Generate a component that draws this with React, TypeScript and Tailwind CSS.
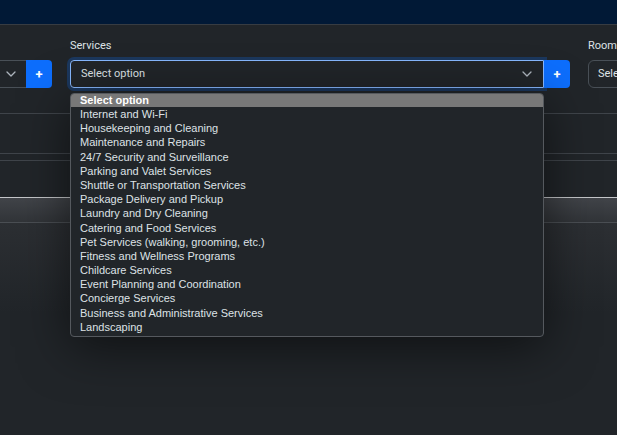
import { useState } from "react";

const services = [
  "Internet and Wi-Fi",
  "Housekeeping and Cleaning",
  "Maintenance and Repairs",
  "24/7 Security and Surveillance",
  "Parking and Valet Services",
  "Shuttle or Transportation Services",
  "Package Delivery and Pickup",
  "Laundry and Dry Cleaning",
  "Catering and Food Services",
  "Pet Services (walking, grooming, etc.)",
  "Fitness and Wellness Programs",
  "Childcare Services",
  "Event Planning and Coordination",
  "Concierge Services",
  "Business and Administrative Services",
  "Landscaping",
];

function Chevron() {
  return (
    <svg width="10" height="6" viewBox="0 0 10 6" className="shrink-0">
      <polyline
        points="1,1 5,5 9,1"
        fill="none"
        stroke="#adb5bd"
        strokeWidth="1.3"
        strokeLinecap="round"
        strokeLinejoin="round"
      />
    </svg>
  );
}

function AddButton() {
  return (
    <button className="w-[26px] h-[28px] bg-[#0d6efd] text-white rounded-r-[4px] flex items-center justify-center text-[13px] font-bold leading-none">
      +
    </button>
  );
}

export default function App() {
  const [open] = useState(true);

  return (
    <div className="relative h-[435px] overflow-hidden bg-[#212529] font-['Roboto',sans-serif] text-[11px] text-[#dee2e6]">
      <nav className="h-[25px] bg-[#011936] border-b border-[#373c42]" />

      {/* form row */}
      <div className="flex gap-[18px] ml-[-180px] pt-[14px]">
        <div className="w-[232px] shrink-0">
          <div className="h-[14px] mb-[7px]" />
          <div className="flex">
            <div className="flex-1 h-[28px] border border-r-0 border-[#495057] flex items-center justify-end pr-[10px]">
              <Chevron />
            </div>
            <AddButton />
          </div>
        </div>

        <div className="w-[500px] shrink-0">
          <label className="block h-[14px] leading-[14px] mb-[7px]">Services</label>
          <div className="flex">
            <div className="flex-1 h-[28px] border border-[#86b7fe] rounded-l-[4px] shadow-[0_0_0_3px_rgba(13,110,253,0.25)] flex items-center justify-between pl-[10px] pr-[11px]">
              <span>Select option</span>
              <Chevron />
            </div>
            <AddButton />
          </div>
        </div>

        <div className="w-[200px] shrink-0">
          <label className="block h-[14px] leading-[14px] mb-[7px]">Rooms</label>
          <div className="h-[28px] border border-[#495057] rounded-l-[6px] flex items-center pl-[9px]">
            Select option
          </div>
        </div>
      </div>

      {/* table-ish lines behind */}
      <div className="h-[25px]" />
      <div className="h-px bg-[#3f444a]" />
      <div className="h-[39px]" />
      <div className="h-px bg-[#3f444a]" />
      <div className="h-[6px]" />
      <div className="h-px bg-[#3f444a]" />
      <div className="h-[36px]" />
      <div className="h-px bg-[#c4c6c9]" />
      <div className="h-[24px] bg-gradient-to-b from-[#414449] to-[#313438]" />
      <div className="h-px bg-[#4a4e53]" />
      <div className="h-[90px] bg-gradient-to-b from-[#2c2f33] to-[#212529]" />

      {open && (
        <div className="absolute left-[70px] top-[93px] w-[474px] bg-[#212529] border border-[#55595e] rounded-[4px] shadow-[0_10px_50px_rgba(0,0,0,0.55)] font-['Liberation_Sans',Arial,sans-serif] text-[11px] text-[#dee2e6]">
          <div className="h-[13px] leading-[13px] pl-[9px] bg-[#787878] text-white font-bold rounded-t-[3px]">
            Select option
          </div>
          {services.map((s) => (
            <div key={s} className="h-[14.2px] leading-[14.2px] pl-[9px]">
              {s}
            </div>
          ))}
          <div className="h-[2px]" />
        </div>
      )}
    </div>
  );
}
